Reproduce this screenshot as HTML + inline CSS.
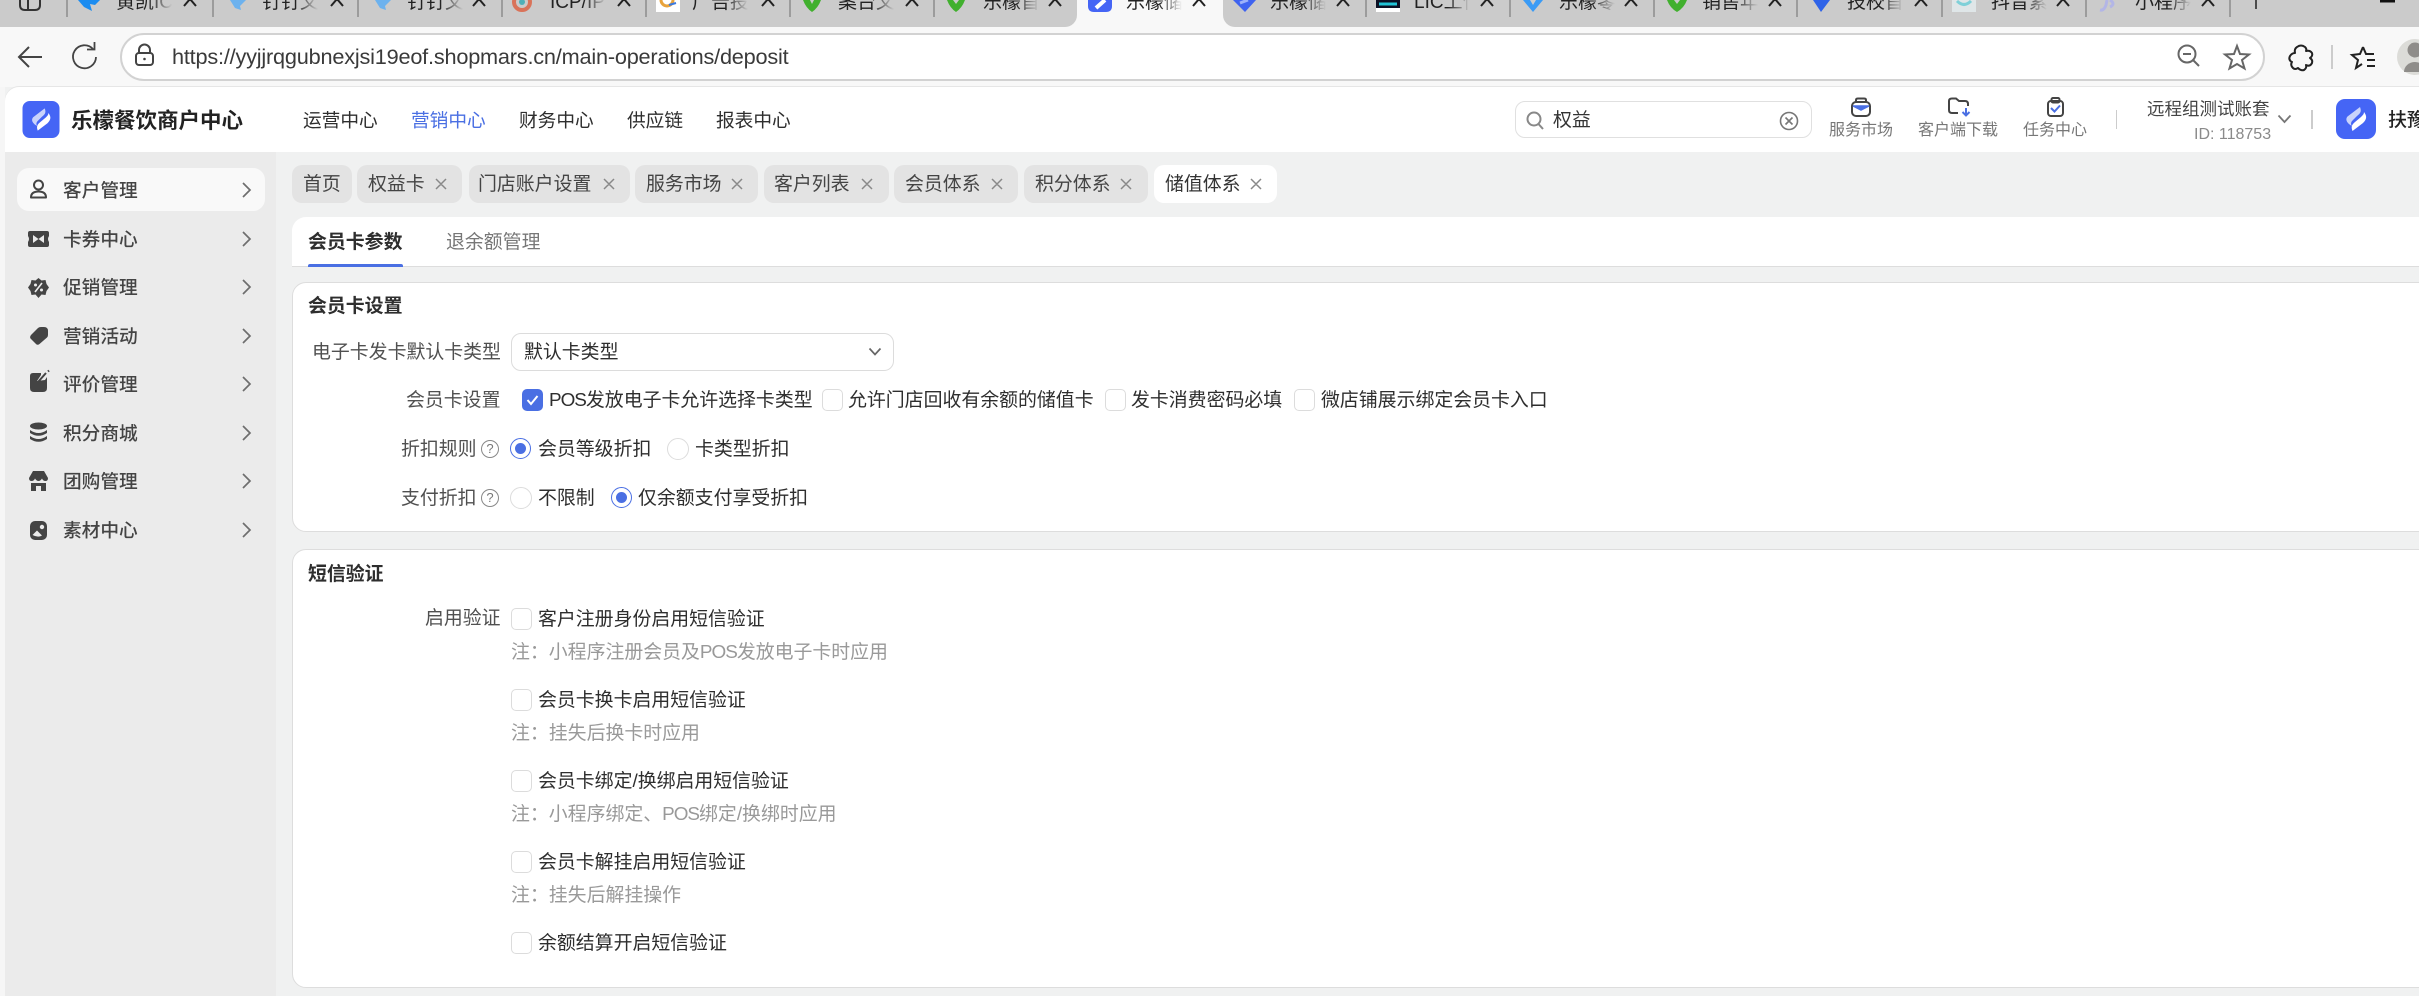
<!DOCTYPE html>
<html lang="zh-CN"><head><meta charset="utf-8"><title>储值体系</title>
<style>
html,body{margin:0;padding:0;width:2419px;height:996px;overflow:hidden;background:#f0f1f1}
body{position:relative;font-family:"Liberation Sans","Noto Sans CJK SC",sans-serif;font-size:18.9px;color:#2e2e2e}
.a{position:absolute}
.t{position:absolute;white-space:nowrap;line-height:30px;height:30px;margin-top:1px}
.p{letter-spacing:-1px}
.l{color:#505050}.n{color:#999}.b{font-weight:700;color:#2e2e2e}
.bt{position:absolute;top:-11px;line-height:28px;font-size:19px;color:#222;white-space:nowrap;overflow:hidden;width:56px;-webkit-mask-image:linear-gradient(90deg,#000 60%,transparent);mask-image:linear-gradient(90deg,#000 60%,transparent)}
.tag{position:absolute;top:165px;height:38px;background:#e3e3e3;border-radius:10px}
.cb{position:absolute;width:19px;height:20px;border:1px solid #dcdcdc;border-radius:5px;background:#fff}
.cb.on{background:#4a6fe3;border-color:#4a6fe3}
.rd{position:absolute;width:20px;height:20px;border:1px solid #dcdcdc;border-radius:50%;background:#fff}
.rd.on{border:1.5px solid #4a6fe3;width:19px;height:19px}
.rd.on:after{content:"";position:absolute;left:4px;top:4px;width:11px;height:11px;border-radius:50%;background:#4a6fe3}
.q{position:absolute;width:16px;height:16px;border:1.5px solid #888;border-radius:50%;font-size:13px;line-height:16px;text-align:center;color:#777}
.side{position:absolute;left:63px;font-weight:500;color:#444;font-size:18.7px}
svg{position:absolute;overflow:visible}
</style></head><body>

<!-- browser tab strip -->
<div class="a" style="left:0;top:0;width:2419px;height:87px;background:#f8f8f8"></div>
<div class="a" style="left:0;top:0;width:1077px;height:27px;background:#cbcbcb;border-bottom-right-radius:12px"></div>
<div class="a" style="left:1223px;top:0;width:1196px;height:27px;background:#cbcbcb;border-bottom-left-radius:12px"></div>

<span class="bt" style="left:116px">黄凯ICP/</span>
<span class="bt" style="left:262px">钉钉文</span>
<span class="bt" style="left:407px">钉钉文</span>
<span class="bt" style="left:550px">ICP/IP</span>
<span class="bt" style="left:692px">广告投</span>
<span class="bt" style="left:838px">案台文</span>
<span class="bt" style="left:983px">乐檬首</span>
<span class="bt" style="left:1126px">乐檬储</span>
<span class="bt" style="left:1270px">乐檬储</span>
<span class="bt" style="left:1414px">LIC工作</span>
<span class="bt" style="left:1559px">乐檬零</span>
<span class="bt" style="left:1702px">销售年</span>
<span class="bt" style="left:1847px">技校首</span>
<span class="bt" style="left:1991px">抖音素</span>
<span class="bt" style="left:2135px">小程序</span>

<svg style="left:0;top:0" width="2419" height="30" viewBox="0 0 2419 30" fill="none">
 <path d="M20 -4V5Q20 10 25 10H35Q40 10 40 5V-4M28 -4V10" stroke="#333" stroke-width="2"/>
 <g stroke="#8c8c8c" stroke-width="1.5">
  <path d="M67 0V17M213 0V17M358 0V17M502 0V17M646 0V17M790 0V17M934 0V17M1366 0V17M1510 0V17M1654 0V17M1797 0V17M1942 0V17M2086 0V17M2230 0V17"/>
 </g>
 <g stroke="#222" stroke-width="2" fill="none">
  <path d="M184 6L190 -1L196 6M331 6L337 -1L343 6M473 6L479 -1L485 6M618 6L624 -1L630 6M762 6L768 -1L774 6M906 6L912 -1L918 6M1049 6L1055 -1L1061 6M1193 6L1199 -1L1205 6M1337 6L1343 -1L1349 6M1481 6L1487 -1L1493 6M1625 6L1631 -1L1637 6M1769 6L1775 -1L1781 6M1915 6L1921 -1L1927 6M2057 6L2063 -1L2069 6M2202 6L2208 -1L2214 6"/>
 </g>
 <path d="M78 0H100L95 5L90 4L92 11L84 7Z" fill="#1b8cf0"/>
 <path d="M230 0H246L240 6L241 10L235 8Z" fill="#6db2ee"/>
 <path d="M375 0H391L385 6L386 10L380 8Z" fill="#6db2ee"/>
 <circle cx="522" cy="2" r="8" fill="none" stroke="#d9735a" stroke-width="4"/><circle cx="522" cy="2" r="3" fill="#4fb0b8"/>
 <rect x="656" y="0" width="24" height="12" fill="#fff"/><path d="M661 0A6 6 0 0 0 673 0" fill="none" stroke="#e8a33c" stroke-width="3"/><path d="M669 5L676 3" stroke="#3b7ae0" stroke-width="2"/>
 <g fill="#41b02e"><path d="M803 0Q806 8 812 12Q818 8 821 0H814L812 4L810 0Z"/><path d="M947 0Q950 8 956 12Q962 8 965 0H959L956 4L953 0Z"/><path d="M1667 0Q1670 8 1677 12Q1684 8 1687 0H1680L1677 4L1674 0Z"/></g>
 <path d="M1088 0H1112V6Q1112 12 1106 12H1094Q1088 12 1088 6Z" fill="#4565f5"/><path d="M1096 8L1105 0" stroke="#fff" stroke-width="4"/>
 <path d="M1233 0H1256L1245 12Z" fill="#3f63f0"/><path d="M1240 3L1248 0" stroke="#9db1fa" stroke-width="3"/>
 <rect x="1376" y="0" width="24" height="12" fill="#fff"/><rect x="1376" y="0" width="24" height="8" fill="#0c1024"/><path d="M1379 4H1397" stroke="#22c3d6" stroke-width="3"/>
 <path d="M1523 0H1530L1533 5L1536 0H1543L1533 12Z" fill="#3b9bf5"/>
 <path d="M1813 0H1830L1821 12Z" fill="#2f63e8"/>
 <rect x="1952" y="0" width="24" height="12" fill="#dfe6e8"/><path d="M1957 1Q1964 8 1971 1" stroke="#7fd0d8" stroke-width="3" fill="none"/>
 <path d="M2100 10Q2104 11 2106 5L2107 0M2110 0Q2116 4 2110 7" stroke="#b3b6e6" stroke-width="3" fill="none"/>
 <path d="M2256 0V9" stroke="#222" stroke-width="1.5"/>
 <path d="M2380 1H2395" stroke="#111" stroke-width="3"/>
</svg>

<!-- toolbar -->
<div class="a" style="left:120px;top:33px;width:2141px;height:44px;background:#fff;border:2px solid #d2d2d2;border-radius:24px"></div>
<span class="t" style="left:172px;top:41px;font-size:21.7px;color:#3a3a3a;letter-spacing:-.2px">https://yyjjrqgubnexjsi19eof.shopmars.cn/main-operations/deposit</span>
<svg style="left:0;top:27px" width="2419" height="60" viewBox="0 27 2419 60" fill="none" stroke="#444" stroke-width="2">
 <path d="M42 57H19M29 47L19 57L29 67"/>
 <path d="M93 49A11.500 11.500 0 1 0 96 57" stroke-width="1.800"/><path d="M87 49.500H94.500V42" stroke-width="1.800"/>
 <rect x="136" y="53" width="17" height="12" rx="3"/><path d="M139 53V50A5.500 5.500 0 0 1 150 50V53"/><circle cx="144.500" cy="59" r="1.300" fill="#444" stroke="none"/>
 <g stroke="#666"><circle cx="2187" cy="54" r="8.500"/><path d="M2183 54H2191M2193 60L2199 66"/></g>
 <path d="M2237 46L2240 54L2249 54.500L2242 60L2244.500 68.500L2237 64L2229.500 68.500L2232 60L2225 54.500L2234 54Z" stroke="#666"/>
 <path d="M2297 47Q2301 44 2305 47Q2307 49 2306 51Q2310 50 2312 53Q2313 56 2310 58Q2313 60 2312 63Q2310 67 2306 65Q2307 68 2304 70Q2301 71 2298 68Q2295 70 2293 68Q2290 65 2292 62Q2288 60 2290 56Q2292 53 2295 53Q2294 49 2297 47Z" stroke="#222" stroke-linejoin="round"/>
 <path d="M2332 45V69" stroke="#ccc"/>
 <path d="M2363 47L2360 54L2352 55L2358 60L2356 68L2362 64" stroke="#222"/><path d="M2363 47L2366 54H2374M2367 60H2375M2367 66H2375" stroke="#222"/>
 <circle cx="2415" cy="57" r="18" fill="#dcdcd8" stroke="none"/><circle cx="2415" cy="50" r="7.500" fill="#8f8d8a" stroke="none"/><path d="M2404 72A11 10 0 0 1 2426 72Z" fill="#8f8d8a" stroke="none"/>
</svg>

<!-- header -->
<div class="a" style="left:5px;top:87px;width:2414px;height:65px;background:#fff;border-top-left-radius:14px;box-shadow:0 -1px 0 #e6e6e6"></div>
<div class="a" style="left:0;top:87px;width:5px;height:909px;background:#f6f6f6"></div>
<svg style="left:22px;top:101px" width="38" height="37" viewBox="0 0 40 40">
 <rect width="40" height="40" rx="8" fill="#4565f5"/>
 <path d="M24 8C25.500 12 25 14 21 17L16 22C14.500 24 15 26 16 27C12 25 8.500 21 11.500 17.500Z" fill="#c9d3fb"/>
 <path d="M28 13C31 17 31 20 27 24L16.500 32C15 28 15.500 26 19 23L25 18C27 16 28 15 28 13Z" fill="#fff"/>
</svg>
<span class="t" style="left:71px;top:105px;font-size:21.500px;font-weight:700;color:#222">乐檬餐饮商户中心</span>
<span class="t" style="left:303px;top:105px;font-size:18.7px">运营中心</span>
<span class="t" style="left:411px;top:105px;font-size:18.7px;color:#4a6fe3">营销中心</span>
<span class="t" style="left:519px;top:105px;font-size:18.7px">财务中心</span>
<span class="t" style="left:627px;top:105px;font-size:18.7px">供应链</span>
<span class="t" style="left:716px;top:105px;font-size:18.7px">报表中心</span>

<div class="a" style="left:1515px;top:101px;width:295px;height:35px;border:1px solid #e0e0e0;border-radius:10px;background:#fff"></div>
<svg style="left:1525px;top:110px" width="22" height="22" fill="none" stroke="#888" stroke-width="2"><circle cx="9" cy="9" r="6.500"/><path d="M13.500 14L18 19"/></svg>
<span class="t" style="left:1553px;top:105px;color:#333">权益</span>
<svg style="left:1779px;top:111px" width="20" height="20" fill="none" stroke="#777" stroke-width="1.600"><circle cx="10" cy="10" r="8.500"/><path d="M6.500 6.500L13.500 13.500M13.500 6.500L6.500 13.500"/></svg>

<svg style="left:1840px;top:95px" width="260" height="24" viewBox="1840 95 260 24" fill="none" stroke="#444" stroke-width="2">
 <rect x="1852" y="102" width="18" height="14" rx="4"/><path d="M1856 102V100Q1856 98.500 1858 98.500H1864Q1866 98.500 1866 100V102"/>
 <path d="M1853 106H1869L1861 110Z" fill="#4a6fe3" stroke="#4a6fe3" stroke-width="1.500"/>
 <path d="M1958 113H1952Q1949 113 1949 110V101Q1949 98.500 1952 98.500H1956L1959 101H1965Q1968 101 1968 104V106"/>
 <path d="M1966 108V115M1962.500 112L1966 115.500L1969.500 112" stroke="#4a6fe3"/>
 <rect x="2048" y="101" width="15" height="15" rx="3"/><rect x="2051.500" y="98" width="8" height="4.500" rx="1.500"/>
 <path d="M2051 108L2054.500 111.500L2060 105.500" stroke="#4a6fe3"/>
</svg>
<span class="t" style="left:1829px;top:115px;font-size:16px;color:#777">服务市场</span>
<span class="t" style="left:1918px;top:115px;font-size:16px;color:#777">客户端下载</span>
<span class="t" style="left:2023px;top:115px;font-size:16px;color:#777">任务中心</span>
<div class="a" style="left:2116px;top:110px;width:1px;height:19px;background:#ccc"></div>
<span class="t" style="left:2147px;top:93px;font-size:17.500px;color:#444">远程组测试账套</span>
<span class="t" style="left:2194px;top:119px;font-size:16px;color:#8a8a8a">ID: 118753</span>
<svg style="left:2277px;top:114px" width="15" height="10" fill="none" stroke="#777" stroke-width="1.800"><path d="M1.500 1.500L7.500 8L13.500 1.500"/></svg>
<div class="a" style="left:2311px;top:110px;width:2px;height:19px;background:#ccc"></div>
<svg style="left:2336px;top:99px" width="40" height="40" viewBox="0 0 40 40">
 <rect width="40" height="40" rx="9" fill="#4565f5"/>
 <path d="M24 8C25.500 12 25 14 21 17L16 22C14.500 24 15 26 16 27C12 25 8.500 21 11.500 17.500Z" fill="#c9d3fb"/>
 <path d="M28 13C31 17 31 20 27 24L16.500 32C15 28 15.500 26 19 23L25 18C27 16 28 15 28 13Z" fill="#fff"/>
</svg>
<span class="t" style="left:2388px;top:105px;font-size:19px;font-weight:500;color:#222">扶豫</span>

<!-- sidebar -->
<div class="a" style="left:5px;top:152px;width:271px;height:844px;background:#ebebeb"></div>
<div class="a" style="left:17px;top:168px;width:248px;height:43px;background:#f9f9f9;border-radius:12px"></div>
<span class="t side" style="top:175px">客户管理</span>
<span class="t side" style="top:224px">卡券中心</span>
<span class="t side" style="top:272px">促销管理</span>
<span class="t side" style="top:321px">营销活动</span>
<span class="t side" style="top:369px">评价管理</span>
<span class="t side" style="top:418px">积分商城</span>
<span class="t side" style="top:466px">团购管理</span>
<span class="t side" style="top:515px">素材中心</span>

<svg style="left:0;top:0" width="276" height="560" fill="none">
 <g stroke="#6e6e6e" stroke-width="1.700"><path d="M243 183L250 190L243 197M243 232L250 239L243 246M243 280L250 287L243 294M243 329L250 336L243 343M243 377L250 384L243 391M243 426L250 433L243 440M243 474L250 481L243 488M243 523L250 530L243 537"/></g>
 <g stroke="#444" stroke-width="2"><circle cx="38.500" cy="185" r="4.500"/><path d="M31 197.500Q31 191.500 38.500 191.500Q46 191.500 46 197.500Z" stroke-linejoin="round"/></g>
 <g fill="#444">
  <path d="M28 233Q28 231 30 231H47Q49 231 49 233V236Q47 239 49 242V245Q49 247 47 247H30Q28 247 28 245V242Q30 239 28 236Z"/>
  <path d="M33 235L38.500 239L44 235V243L38.500 239L33 243Z" fill="#ebebeb"/>
  <path d="M38.500 278L41.500 280.500L45.500 280L46.500 284L49 287.500L46.500 291L45.500 295L41.500 294.500L38.500 298L35.500 294.500L31.500 295L30.500 291L28 287.500L30.500 284L31.500 280L35.500 280.500Z"/>
  <path d="M35 292L42 283" stroke="#ebebeb" stroke-width="1.600"/><circle cx="35.500" cy="285" r="1.500" fill="#ebebeb"/><circle cx="41.500" cy="290" r="1.500" fill="#ebebeb"/>
  <path d="M44 327Q48 327 48 331V335Q48 336.500 47 337.500L39.500 344Q37.500 345.500 36 344L30.500 338.500Q29.500 337 31 335L38 328Q39 327 41 327Z"/>
  <path d="M33 373H41V375L37 381L45 380L47 377V388Q47 392 43 392H34Q30 392 30 388V376Q30 373 33 373Z"/>
  <path d="M38 382L46 373M48 371.500L49 370.500" stroke="#444" stroke-width="2"/>
  <ellipse cx="38.500" cy="426" rx="8.500" ry="3.500"/>
  <path d="M30 430Q38.500 436 47 430V433Q38.500 438.500 30 433ZM30 436Q38.500 442 47 436V439Q38.500 444.500 30 439Z"/>
  <path d="M33 471H44L48 478Q48 481 45.500 481Q43 481 42 478.500Q40.500 481 38.500 481Q36.500 481 35 478.500Q34 481 31.500 481Q29 481 29 478Z"/>
  <path d="M31 483H46V491H41V486H36V491H31Z"/>
  <rect x="30" y="521" width="17" height="19" rx="5"/>
  <circle cx="42" cy="527" r="2.200" fill="#ebebeb"/>
  <path d="M32.500 535L37 530.500L42 535.500Q38 538 32.500 535Z" fill="#ebebeb"/>
 </g>
</svg>

<!-- tags -->
<div class="tag" style="left:292px;width:60px"></div>
<div class="tag" style="left:357px;width:105px"></div>
<div class="tag" style="left:469px;width:161px"></div>
<div class="tag" style="left:635px;width:123px"></div>
<div class="tag" style="left:764px;width:125px"></div>
<div class="tag" style="left:894px;width:124px"></div>
<div class="tag" style="left:1024px;width:124px"></div>
<div class="tag" style="left:1154px;width:123px;background:#fff"></div>
<span class="t" style="left:303px;top:169px;color:#444">首页</span>
<span class="t" style="left:368px;top:169px;color:#444">权益卡</span>
<span class="t" style="left:478px;top:169px;color:#444">门店账户设置</span>
<span class="t" style="left:646px;top:169px;color:#444">服务市场</span>
<span class="t" style="left:774px;top:169px;color:#444">客户列表</span>
<span class="t" style="left:905px;top:169px;color:#444">会员体系</span>
<span class="t" style="left:1035px;top:169px;color:#444">积分体系</span>
<span class="t" style="left:1165px;top:169px;color:#333">储值体系</span>
<svg style="left:0;top:170px" width="1300" height="30" fill="none" stroke="#888" stroke-width="1.500">
 <path d="M436 9L446 19M446 9L436 19M604 9L614 19M614 9L604 19M732 9L742 19M742 9L732 19M862 9L872 19M872 9L862 19M992 9L1002 19M1002 9L992 19M1121 9L1131 19M1131 9L1121 19M1251 9L1261 19M1261 9L1251 19"/>
</svg>

<!-- tabs card -->
<div class="a" style="left:292px;top:217px;width:2200px;height:49px;background:#fff;border-top-left-radius:14px;border-bottom:1px solid #ddd"></div>
<div class="a" style="left:308px;top:264px;width:95px;height:3px;background:#4a6fe3;border-radius:2px 2px 0 0"></div>
<span class="t b" style="left:308px;top:227px">会员卡参数</span>
<span class="t" style="left:446px;top:227px;color:#777">退余额管理</span>

<!-- card 1 -->
<div class="a" style="left:292px;top:282px;width:2200px;height:248px;background:#fff;border:1px solid #ddd;border-radius:14px"></div>
<span class="t b" style="left:308px;top:291px">会员卡设置</span>
<span class="t l" style="left:312px;top:337px">电子卡发卡默认卡类型</span>
<div class="a" style="left:511px;top:333px;width:381px;height:36px;border:1px solid #dcdcdc;border-radius:10px;background:#fff"></div>
<span class="t" style="left:524px;top:337px">默认卡类型</span>
<svg style="left:868px;top:347px" width="14" height="10" fill="none" stroke="#666" stroke-width="1.700"><path d="M1.500 1.500L7 7.500L12.500 1.500"/></svg>

<span class="t l" style="left:406px;top:385px">会员卡设置</span>
<div class="cb on" style="left:522px;top:389px"></div>
<svg style="left:522px;top:389px" width="21" height="22" fill="none" stroke="#fff" stroke-width="2"><path d="M5.500 11L9 15L15.500 7"/></svg>
<span class="t" style="left:549px;top:385px"><span class="p">POS</span>发放电子卡允许选择卡类型</span>
<div class="cb" style="left:822px;top:389px"></div>
<span class="t" style="left:848px;top:385px">允许门店回收有余额的储值卡</span>
<div class="cb" style="left:1105px;top:389px"></div>
<span class="t" style="left:1131px;top:385px">发卡消费密码必填</span>
<div class="cb" style="left:1294px;top:389px"></div>
<span class="t" style="left:1321px;top:385px">微店铺展示绑定会员卡入口</span>

<span class="t l" style="left:401px;top:434px">折扣规则</span>
<div class="q" style="left:481px;top:440px">?</div>
<div class="rd on" style="left:510px;top:438px"></div>
<span class="t" style="left:538px;top:434px">会员等级折扣</span>
<div class="rd" style="left:667px;top:438px"></div>
<span class="t" style="left:695px;top:434px">卡类型折扣</span>

<span class="t l" style="left:401px;top:483px">支付折扣</span>
<div class="q" style="left:481px;top:489px">?</div>
<div class="rd" style="left:510px;top:487px"></div>
<span class="t" style="left:538px;top:483px">不限制</span>
<div class="rd on" style="left:611px;top:487px"></div>
<span class="t" style="left:638px;top:483px">仅余额支付享受折扣</span>

<!-- card 2 -->
<div class="a" style="left:292px;top:549px;width:2200px;height:437px;background:#fff;border:1px solid #ddd;border-radius:14px"></div>
<span class="t b" style="left:308px;top:559px">短信验证</span>
<span class="t l" style="left:425px;top:603px">启用验证</span>
<div class="cb" style="left:511px;top:608px"></div>
<span class="t" style="left:538px;top:604px">客户注册身份启用短信验证</span>
<span class="t n" style="left:511px;top:637px">注：小程序注册会员及<span class="p">POS</span>发放电子卡时应用</span>
<div class="cb" style="left:511px;top:689px"></div>
<span class="t" style="left:538px;top:685px">会员卡换卡启用短信验证</span>
<span class="t n" style="left:511px;top:718px">注：挂失后换卡时应用</span>
<div class="cb" style="left:511px;top:770px"></div>
<span class="t" style="left:538px;top:766px">会员卡绑定/换绑启用短信验证</span>
<span class="t n" style="left:511px;top:799px">注：小程序绑定、<span class="p">POS</span>绑定/换绑时应用</span>
<div class="cb" style="left:511px;top:851px"></div>
<span class="t" style="left:538px;top:847px">会员卡解挂启用短信验证</span>
<span class="t n" style="left:511px;top:880px">注：挂失后解挂操作</span>
<div class="cb" style="left:511px;top:932px"></div>
<span class="t" style="left:538px;top:928px">余额结算开启短信验证</span>

</body></html>
